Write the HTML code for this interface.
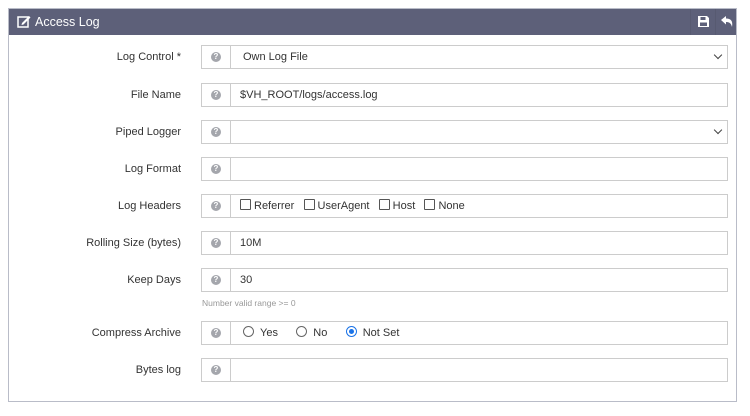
<!DOCTYPE html>
<html><head><style>
body{margin:0;width:750px;height:416px;background:#fff;font-family:"Liberation Sans",sans-serif;font-size:11px;color:#333;position:relative;overflow:hidden}
.panel{position:absolute;left:8px;top:8px;width:729px;height:394px;border:1px solid #b9bcc8;box-sizing:border-box}
.hd{position:absolute;left:0;top:0;right:0;height:26px;background:#5d6079;color:#fff;font-size:12.5px;line-height:26px}
.hd .t{position:absolute;left:26px}
.sep{position:absolute;top:0;width:1px;height:26px;background:#575a71}
.row{position:absolute;left:0;width:100%;height:24px}
.lab{position:absolute;right:555px;top:0;line-height:24px;text-align:right;white-space:nowrap;color:#333}
.box{position:absolute;left:192px;width:527px;height:24px;border:1px solid #ccc;box-sizing:border-box;background:#fff}
.q{position:absolute;left:0;top:0;width:28px;height:22px;border-right:1px solid #ccc;}
.q:after{content:"?";position:absolute;left:9px;top:6px;width:10px;height:10px;border-radius:50%;background:#a4a6ac;color:#fff;font-size:8px;line-height:10px;text-align:center;font-weight:bold}
.v{position:absolute;left:38px;top:0;line-height:22px}
.chev{position:absolute;right:6px;top:6px;width:5px;height:5px;border-right:1.5px solid #444;border-bottom:1.5px solid #444;transform:rotate(45deg)}
.cb{display:inline-block;width:9px;height:9px;border:1px solid #555;border-radius:1px;vertical-align:-1px;margin-right:3px}
.rd{display:inline-block;width:9px;height:9px;border:1px solid #666;border-radius:50%;vertical-align:-1px;margin-right:6px;position:relative}
.rd.on{border-color:#1a73e8}
.rd.on:after{content:"";position:absolute;left:2px;top:2px;width:5px;height:5px;border-radius:50%;background:#1a73e8}
</style></head><body>
<div class="panel">
<div class="hd">
<svg style="position:absolute;left:8px;top:6px" width="14" height="13" viewBox="0 0 14 13"><rect x="1" y="2" width="10" height="10" fill="none" stroke="#fff" stroke-width="1.5"/><path d="M5 8 L12 1 L13.5 2.5 L6.5 9.5 L4.5 10 Z" fill="#fff"/></svg>
<span class="t">Access Log</span>
<div class="sep" style="left:681px"></div><div class="sep" style="left:706px"></div>
<svg style="position:absolute;left:689px;top:7px" width="11" height="11" viewBox="0 0 11 11"><path d="M0 0H9L11 2V11H0Z" fill="#fff"/><rect x="2.5" y="1" width="5" height="3" fill="#5d6079"/><rect x="2" y="6.5" width="7" height="3.5" fill="#5d6079"/></svg>
<svg style="position:absolute;left:712px;top:7px" width="12" height="11" viewBox="0 0 12 11"><path d="M0 4 L5 0 V2.5 C10 2.5 12 5 11 11 C10 7 8 6 5 6 V8.5 Z" fill="#fff"/></svg>
</div>
<div class="row" style="top:36px"><div class="lab">Log Control *</div><div class="box"><div class="q"></div><div class="v" style="left:41px">Own Log File</div><div class="chev"></div></div></div>
<div class="row" style="top:74px"><div class="lab">File Name</div><div class="box"><div class="q"></div><div class="v">$VH_ROOT/logs/access.log</div></div></div>
<div class="row" style="top:111px"><div class="lab">Piped Logger</div><div class="box"><div class="q"></div><div class="chev"></div></div></div>
<div class="row" style="top:148px"><div class="lab">Log Format</div><div class="box"><div class="q"></div></div></div>
<div class="row" style="top:185px"><div class="lab">Log Headers</div><div class="box"><div class="q"></div><div class="v"><span class="cb"></span>Referrer&nbsp;&nbsp;&nbsp;<span class="cb"></span>UserAgent&nbsp;&nbsp;&nbsp;<span class="cb"></span>Host&nbsp;&nbsp;&nbsp;<span class="cb"></span>None</div></div></div>
<div class="row" style="top:222px"><div class="lab">Rolling Size (bytes)</div><div class="box"><div class="q"></div><div class="v">10M</div></div></div>
<div class="row" style="top:259px"><div class="lab">Keep Days</div><div class="box"><div class="q"></div><div class="v">30</div></div></div>
<div style="position:absolute;left:193px;top:289px;font-size:8.5px;color:#999">Number valid range &gt;= 0</div>
<div class="row" style="top:312px"><div class="lab">Compress Archive</div><div class="box"><div class="q"></div><div class="v" style="left:41px"><span class="rd"></span>Yes&nbsp;&nbsp;&nbsp;&nbsp;&nbsp;&nbsp;<span class="rd"></span>No&nbsp;&nbsp;&nbsp;&nbsp;&nbsp;&nbsp;<span class="rd on"></span>Not Set</div></div></div>
<div class="row" style="top:349px"><div class="lab">Bytes log</div><div class="box"><div class="q"></div></div></div>
</div>
</body></html>
